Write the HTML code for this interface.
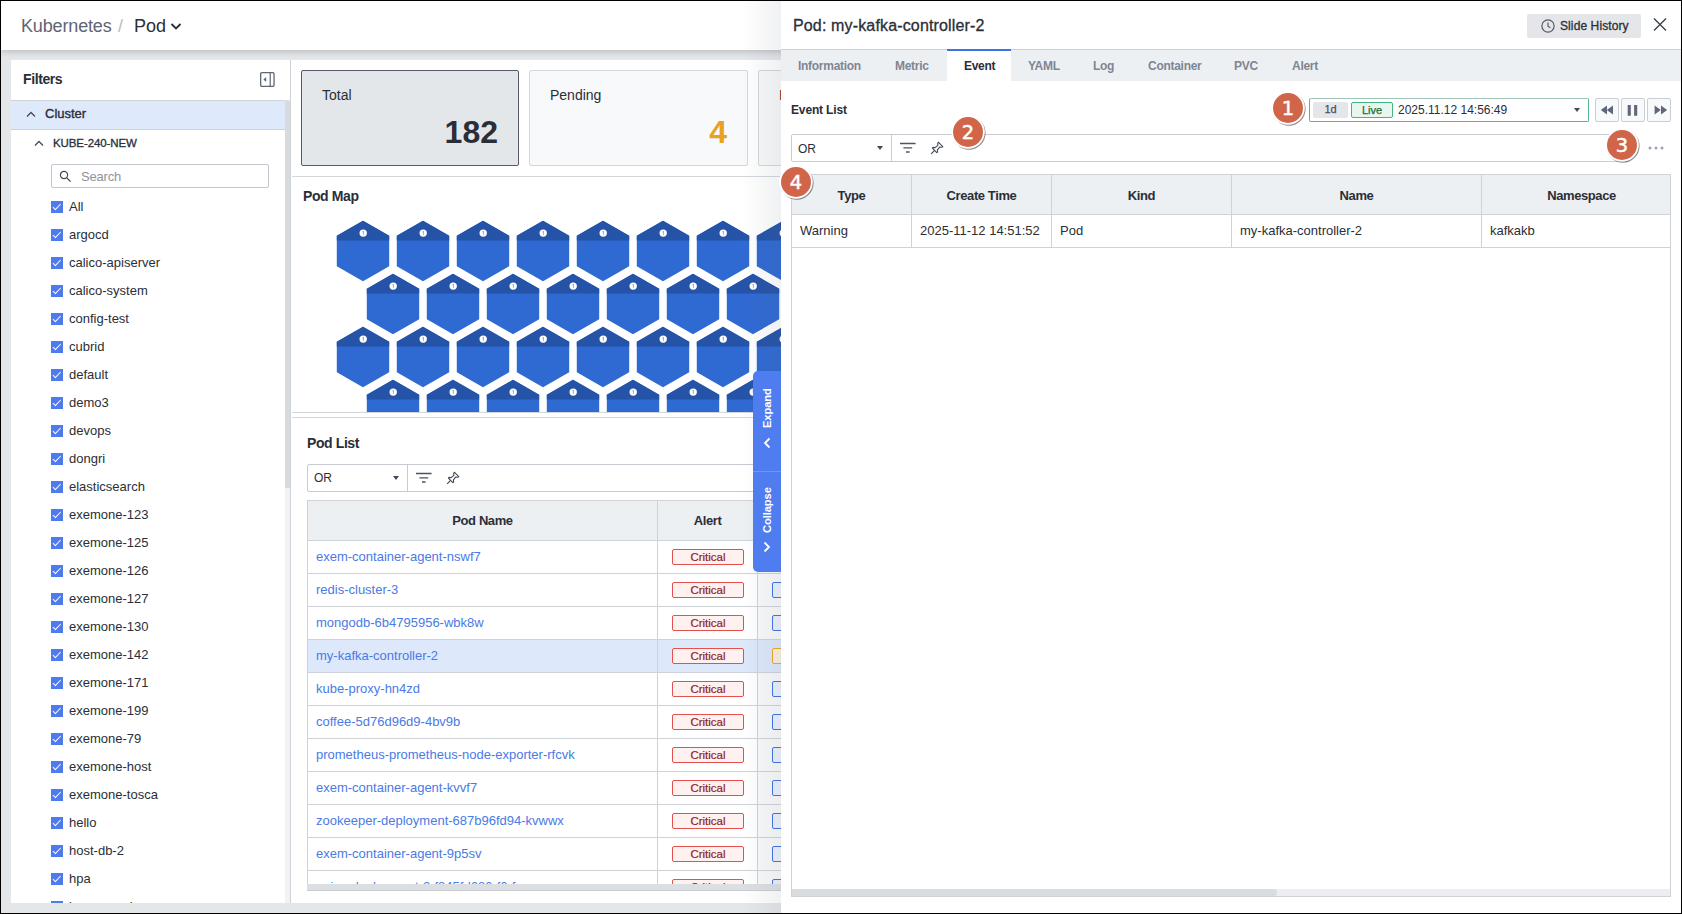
<!DOCTYPE html>
<html lang="en">
<head>
<meta charset="utf-8">
<title>Kubernetes / Pod</title>
<style>
*{box-sizing:border-box;margin:0;padding:0}
html,body{width:1682px;height:914px;overflow:hidden}
body{position:relative;background:#e4e7ea;font-family:"Liberation Sans",sans-serif;font-size:13px;color:#2a2e37}
.abs{position:absolute}
#frame{position:absolute;left:0;top:0;width:1682px;height:914px;border:1px solid #000;z-index:100;pointer-events:none}
/* header */
#hdr{position:absolute;left:1px;top:1px;width:1680px;height:49px;background:#fff;box-shadow:0 2px 6px rgba(70,75,85,.26)}
#hdr .k{position:absolute;left:20px;top:14px;font-size:18px;line-height:22px;color:#5f6573;letter-spacing:-0.15px}
#hdr .s{position:absolute;left:117px;top:14px;font-size:18px;line-height:22px;color:#b8bcc4}
#hdr .p{position:absolute;left:133px;top:14px;font-size:18px;line-height:22px;color:#2a2e37}
/* filters */
#flt{position:absolute;left:11px;top:60px;width:280px;height:843px;background:#fff;overflow:hidden;border-right:1px solid #cfd3d8}
#flt .ttl{position:absolute;left:12px;top:11px;font-weight:bold;font-size:14px;line-height:16px;color:#2a2e37;letter-spacing:-0.4px}
#flt .clu{position:absolute;left:0;top:40px;width:274px;height:30px;background:#dfe9fc;border-top:1px solid #cfd3d8;border-bottom:1px solid #cfd3d8}
#flt .clu span{position:absolute;left:34px;top:5px;font-size:13px;line-height:16px;color:#2a2e37;-webkit-text-stroke:0.35px #2a2e37}
#flt .kube{position:absolute;left:42px;top:76px;font-size:11.5px;line-height:14px;color:#2a2e37;-webkit-text-stroke:0.3px #2a2e37;letter-spacing:-0.1px}
#flt .srch{position:absolute;left:40px;top:104px;width:218px;height:24px;border:1px solid #c2c6cd;border-radius:2px;background:#fff}
#flt .srch span{position:absolute;left:29px;top:3.7px;font-size:13px;line-height:16px;color:#8e939d;letter-spacing:-0.2px}
.ck{position:absolute;left:40px;width:200px;height:16px}
.ck i{position:absolute;left:0;top:2px;width:12px;height:12px;background:#4d7bef}
.ck i:after{content:"";position:absolute;left:2.2px;top:2.6px;width:6.5px;height:3.4px;border-left:1.4px solid #fff;border-bottom:1.4px solid #fff;transform:rotate(-47deg)}
.ck span{position:absolute;left:18px;top:0;font-size:13px;line-height:16px;color:#2a2e37;white-space:nowrap}
#fsb{position:absolute;left:274px;top:40px;width:5px;height:803px;background:#f1f2f4}
#fsb:before{content:"";position:absolute;left:0;top:0;width:5px;height:388px;background:#d8dbde;border-radius:2px 2px 0 0}
/* main */
#main{position:absolute;left:292px;top:60px;width:489px;height:843px;background:#fff;overflow:hidden;box-shadow:-1px 0 0 #fff}
.card{position:absolute;top:10px;width:219px;height:96px;border:1px solid #d3d6db;border-radius:2px;background:#f8f9fa}
.card .l{position:absolute;left:20px;top:16px;font-size:14px;line-height:16px;color:#2a2e37}
.card .v{position:absolute;right:20px;top:43.2px;font-size:32px;line-height:36px;font-weight:bold;color:#2a2e37}
.hl{position:absolute;left:0;width:489px;height:1px;background:#d3d6db}
.h2{position:absolute;font-weight:bold;font-size:14px;line-height:16px;color:#2a2e37;letter-spacing:-0.4px}

/* filter bar */
.fbar{position:absolute;height:28px;border:1px solid #c8ccd2;border-radius:2px;background:#fff}
.fbar .or{position:absolute;left:0;top:0;width:100px;height:26px;border-right:1px solid #c8ccd2}
.fbar .or span{position:absolute;left:6px;top:6px;font-size:12px;line-height:16px;color:#2a2e37}
.fbar .or b{position:absolute;left:85px;top:11px;width:0;height:0;border-left:3.5px solid transparent;border-right:3.5px solid transparent;border-top:4px solid #444a55}
/* tables */
.th{position:absolute;background:#edf0f3;border:1px solid #cfd3d8;font-weight:bold;font-size:13px;color:#2a2e37;text-align:center;letter-spacing:-0.4px;padding-top:1px}
.td{position:absolute;background:#fff;border:1px solid #cfd3d8;border-top:none;font-size:13px;color:#2a2e37;white-space:nowrap;overflow:hidden}
.td a{position:absolute;left:8px;top:8px;line-height:16px;color:#4a7ae6;text-decoration:none}
.td.sel{background:#dde8fb}
.crit{position:absolute;left:14px;top:8px;width:72px;height:16px;border:1px solid #e4504c;border-radius:2px;background:#fef1f0;color:#8f1d1d;font-size:11.5px;line-height:14px;text-align:center;-webkit-text-stroke:0.2px #8f1d1d}
.bx{position:absolute;left:14px;top:8px;width:40px;height:16px;border:1px solid #3f72e6;border-radius:2px;background:#ecf1fd}
.bx.o{border-color:#eea42c;background:#fdf1dc}
/* expand tab */
#exp{position:absolute;left:753px;top:371px;width:28px;height:201px;background:#4f7df0;border-radius:5px 0 0 5px;z-index:5;color:#fff;overflow:hidden}
#exp .ln{position:absolute;left:0;top:100px;width:28px;height:1px;background:#6f95f4}
#exp .t{position:absolute;left:0;width:28px;font-weight:bold;font-size:11.2px;line-height:28px;white-space:nowrap;transform-origin:0 0;letter-spacing:-0.1px;transform:rotate(-90deg);text-align:left}
/* panel */
#shade{position:absolute;left:741px;top:1px;width:40px;height:912px;background:linear-gradient(to right,rgba(90,100,115,0),rgba(90,100,115,.09));z-index:4}
#pnl{position:absolute;left:781px;top:1px;width:900px;height:912px;background:#fff;z-index:6}
#pnl .title{position:absolute;left:12px;top:15.3px;font-size:16px;line-height:20px;color:#2a2e37;-webkit-text-stroke:0.3px #2a2e37;letter-spacing:0.15px}
#pnl .sh{position:absolute;left:746px;top:13px;width:114px;height:24px;background:#e4e6ea;border-radius:2px}
#pnl .sh span{position:absolute;left:33px;top:4px;font-size:12px;line-height:16px;color:#2a2e37;-webkit-text-stroke:0.3px #2a2e37;letter-spacing:0.1px}
#tabs{position:absolute;left:0;top:48px;width:900px;height:32px;background:#edf0f3;border-top:1px solid #cdd1d6}
#tabs span{position:absolute;top:8px;font-size:12px;line-height:16px;font-weight:bold;color:#7f8592;white-space:nowrap;letter-spacing:-0.28px}
#tabs .act{position:absolute;left:166px;top:-1px;width:64px;height:32px;background:#fff}
#tabs .act:before{content:"";position:absolute;left:0;top:0;width:64px;height:1.6px;background:#3f72e6}
.num{position:absolute;width:31px;height:31px;border-radius:50%;background:#d1623f;border:2px solid #fff;box-shadow:0 1px 3px rgba(0,0,0,.5);color:#fff;font-size:19px;line-height:27px;text-align:center;font-family:"DejaVu Sans","Liberation Sans",sans-serif;z-index:9}
#tp{position:absolute;left:528px;top:97px;width:280px;height:24px;border:1px solid #52b88f;border-top-color:#9ec4bb;border-radius:2px;background:#fff}
#tp .d1{position:absolute;left:3px;top:3px;width:35px;height:16px;background:#e4e6ea;border-radius:2px;font-size:11px;line-height:14px;text-align:center;color:#4a4f5c;-webkit-text-stroke:0.25px #4a4f5c}
#tp .lv{position:absolute;left:41px;top:3px;width:42px;height:16px;background:#e7f7ee;border:1px solid #43b581;border-radius:2px;font-size:11px;line-height:14px;text-align:center;color:#1b6b43;-webkit-text-stroke:0.25px #1b6b43}
#tp .dt{position:absolute;left:88px;top:3px;font-size:12px;line-height:16px;color:#2a2e37}
#tp b{position:absolute;left:264px;top:9px;width:0;height:0;border-left:3.5px solid transparent;border-right:3.5px solid transparent;border-top:4px solid #444a55}
.pb{position:absolute;top:97px;width:24px;height:24px;border:1px solid #c9cdd6;border-radius:2px;background:#f8f9fb}
</style>
</head>
<body>
<div id="hdr">
  <span class="k">Kubernetes</span><span class="s">/</span><span class="p">Pod</span>
  <svg class="abs" style="left:169px;top:20.7px" width="12" height="9" viewBox="0 0 12 9"><path d="M1.5 2 L6 6.5 L10.5 2" fill="none" stroke="#2a2e37" stroke-width="1.8"/></svg>
</div>

<div id="flt">
  <div class="ttl">Filters</div>
  <svg class="abs" style="left:248.6px;top:12.3px" width="15" height="15" viewBox="0 0 15 15"><rect x="0.65" y="0.65" width="13.4" height="13.7" rx="1.2" fill="none" stroke="#5e6575" stroke-width="1.3"/><path d="M10.2 1 V14" stroke="#5e6575" stroke-width="1.2"/><path d="M6.2 5 L3.4 7.5 L6.2 10 Z" fill="#5e6575"/></svg>
  <div class="clu"><svg class="abs" style="left:15px;top:10px" width="10" height="7" viewBox="0 0 10 7"><path d="M1 5.5 L5 1.5 L9 5.5" fill="none" stroke="#444a55" stroke-width="1.3"/></svg><span>Cluster</span></div>
  <svg class="abs" style="left:23px;top:80px" width="10" height="7" viewBox="0 0 10 7"><path d="M1 5.5 L5 1.5 L9 5.5" fill="none" stroke="#444a55" stroke-width="1.3"/></svg>
  <div class="kube">KUBE-240-NEW</div>
  <div class="srch"><svg class="abs" style="left:7px;top:5px" width="13" height="13" viewBox="0 0 13 13"><circle cx="5" cy="5" r="3.6" fill="none" stroke="#444a55" stroke-width="1.2"/><path d="M7.6 7.6 L11.6 11.6" stroke="#444a55" stroke-width="1.3"/></svg><span>Search</span></div>
  <div id="cks">
  <div class="ck" style="top:139px"><i></i><span>All</span></div>
  <div class="ck" style="top:167px"><i></i><span>argocd</span></div>
  <div class="ck" style="top:195px"><i></i><span>calico-apiserver</span></div>
  <div class="ck" style="top:223px"><i></i><span>calico-system</span></div>
  <div class="ck" style="top:251px"><i></i><span>config-test</span></div>
  <div class="ck" style="top:279px"><i></i><span>cubrid</span></div>
  <div class="ck" style="top:307px"><i></i><span>default</span></div>
  <div class="ck" style="top:335px"><i></i><span>demo3</span></div>
  <div class="ck" style="top:363px"><i></i><span>devops</span></div>
  <div class="ck" style="top:391px"><i></i><span>dongri</span></div>
  <div class="ck" style="top:419px"><i></i><span>elasticsearch</span></div>
  <div class="ck" style="top:447px"><i></i><span>exemone-123</span></div>
  <div class="ck" style="top:475px"><i></i><span>exemone-125</span></div>
  <div class="ck" style="top:503px"><i></i><span>exemone-126</span></div>
  <div class="ck" style="top:531px"><i></i><span>exemone-127</span></div>
  <div class="ck" style="top:559px"><i></i><span>exemone-130</span></div>
  <div class="ck" style="top:587px"><i></i><span>exemone-142</span></div>
  <div class="ck" style="top:615px"><i></i><span>exemone-171</span></div>
  <div class="ck" style="top:643px"><i></i><span>exemone-199</span></div>
  <div class="ck" style="top:671px"><i></i><span>exemone-79</span></div>
  <div class="ck" style="top:699px"><i></i><span>exemone-host</span></div>
  <div class="ck" style="top:727px"><i></i><span>exemone-tosca</span></div>
  <div class="ck" style="top:755px"><i></i><span>hello</span></div>
  <div class="ck" style="top:783px"><i></i><span>host-db-2</span></div>
  <div class="ck" style="top:811px"><i></i><span>hpa</span></div>
  <div class="ck" style="top:839px"><i></i><span>ingress-nginx</span></div>
  </div>
  <div id="fsb"></div>
</div>

<div id="main">
  <div class="card" style="left:9px;width:218px;border-color:#555b68;background:#e4e7ea"><div class="l">Total</div><div class="v">182</div></div>
  <div class="card" style="left:237px"><div class="l">Pending</div><div class="v" style="color:#e9a123">4</div></div>
  <div class="card" style="left:466px"><div class="l" style="color:#7a2a1c">Failed</div></div>
  <div class="hl" style="top:116px"></div>
  <div class="h2" style="left:11px;top:128px">Pod Map</div>
  <svg class="abs" style="left:0;top:150px" width="489" height="202" viewBox="0 0 489 202">
  <g transform="translate(71 41)"><path d="M0 -30.2 L26.2 -15.2 L26.2 15.2 L0 30.2 L-26.2 15.2 L-26.2 -15.2 Z" fill="#2f69d2"/><path d="M0 -30.2 L26.2 -15.2 L26.2 -10.6 L-26.2 -10.6 L-26.2 -15.2 Z" fill="#2553a8"/><circle cx="0.2" cy="-17.9" r="3.7" fill="#fff"/><path d="M-0.25 -20.1 L0.65 -20.1 L0.4 -15.7 L0 -15.7 Z" fill="#4c72bd"/></g>
  <g transform="translate(131 41)"><path d="M0 -30.2 L26.2 -15.2 L26.2 15.2 L0 30.2 L-26.2 15.2 L-26.2 -15.2 Z" fill="#2f69d2"/><path d="M0 -30.2 L26.2 -15.2 L26.2 -10.6 L-26.2 -10.6 L-26.2 -15.2 Z" fill="#2553a8"/><circle cx="0.2" cy="-17.9" r="3.7" fill="#fff"/><path d="M-0.25 -20.1 L0.65 -20.1 L0.4 -15.7 L0 -15.7 Z" fill="#4c72bd"/></g>
  <g transform="translate(191 41)"><path d="M0 -30.2 L26.2 -15.2 L26.2 15.2 L0 30.2 L-26.2 15.2 L-26.2 -15.2 Z" fill="#2f69d2"/><path d="M0 -30.2 L26.2 -15.2 L26.2 -10.6 L-26.2 -10.6 L-26.2 -15.2 Z" fill="#2553a8"/><circle cx="0.2" cy="-17.9" r="3.7" fill="#fff"/><path d="M-0.25 -20.1 L0.65 -20.1 L0.4 -15.7 L0 -15.7 Z" fill="#4c72bd"/></g>
  <g transform="translate(251 41)"><path d="M0 -30.2 L26.2 -15.2 L26.2 15.2 L0 30.2 L-26.2 15.2 L-26.2 -15.2 Z" fill="#2f69d2"/><path d="M0 -30.2 L26.2 -15.2 L26.2 -10.6 L-26.2 -10.6 L-26.2 -15.2 Z" fill="#2553a8"/><circle cx="0.2" cy="-17.9" r="3.7" fill="#fff"/><path d="M-0.25 -20.1 L0.65 -20.1 L0.4 -15.7 L0 -15.7 Z" fill="#4c72bd"/></g>
  <g transform="translate(311 41)"><path d="M0 -30.2 L26.2 -15.2 L26.2 15.2 L0 30.2 L-26.2 15.2 L-26.2 -15.2 Z" fill="#2f69d2"/><path d="M0 -30.2 L26.2 -15.2 L26.2 -10.6 L-26.2 -10.6 L-26.2 -15.2 Z" fill="#2553a8"/><circle cx="0.2" cy="-17.9" r="3.7" fill="#fff"/><path d="M-0.25 -20.1 L0.65 -20.1 L0.4 -15.7 L0 -15.7 Z" fill="#4c72bd"/></g>
  <g transform="translate(371 41)"><path d="M0 -30.2 L26.2 -15.2 L26.2 15.2 L0 30.2 L-26.2 15.2 L-26.2 -15.2 Z" fill="#2f69d2"/><path d="M0 -30.2 L26.2 -15.2 L26.2 -10.6 L-26.2 -10.6 L-26.2 -15.2 Z" fill="#2553a8"/><circle cx="0.2" cy="-17.9" r="3.7" fill="#fff"/><path d="M-0.25 -20.1 L0.65 -20.1 L0.4 -15.7 L0 -15.7 Z" fill="#4c72bd"/></g>
  <g transform="translate(431 41)"><path d="M0 -30.2 L26.2 -15.2 L26.2 15.2 L0 30.2 L-26.2 15.2 L-26.2 -15.2 Z" fill="#2f69d2"/><path d="M0 -30.2 L26.2 -15.2 L26.2 -10.6 L-26.2 -10.6 L-26.2 -15.2 Z" fill="#2553a8"/><circle cx="0.2" cy="-17.9" r="3.7" fill="#fff"/><path d="M-0.25 -20.1 L0.65 -20.1 L0.4 -15.7 L0 -15.7 Z" fill="#4c72bd"/></g>
  <g transform="translate(491 41)"><path d="M0 -30.2 L26.2 -15.2 L26.2 15.2 L0 30.2 L-26.2 15.2 L-26.2 -15.2 Z" fill="#2f69d2"/><path d="M0 -30.2 L26.2 -15.2 L26.2 -10.6 L-26.2 -10.6 L-26.2 -15.2 Z" fill="#2553a8"/><circle cx="0.2" cy="-17.9" r="3.7" fill="#fff"/><path d="M-0.25 -20.1 L0.65 -20.1 L0.4 -15.7 L0 -15.7 Z" fill="#4c72bd"/></g>
  <g transform="translate(101 94)"><path d="M0 -30.2 L26.2 -15.2 L26.2 15.2 L0 30.2 L-26.2 15.2 L-26.2 -15.2 Z" fill="#2f69d2"/><path d="M0 -30.2 L26.2 -15.2 L26.2 -10.6 L-26.2 -10.6 L-26.2 -15.2 Z" fill="#2553a8"/><circle cx="0.2" cy="-17.9" r="3.7" fill="#fff"/><path d="M-0.25 -20.1 L0.65 -20.1 L0.4 -15.7 L0 -15.7 Z" fill="#4c72bd"/></g>
  <g transform="translate(161 94)"><path d="M0 -30.2 L26.2 -15.2 L26.2 15.2 L0 30.2 L-26.2 15.2 L-26.2 -15.2 Z" fill="#2f69d2"/><path d="M0 -30.2 L26.2 -15.2 L26.2 -10.6 L-26.2 -10.6 L-26.2 -15.2 Z" fill="#2553a8"/><circle cx="0.2" cy="-17.9" r="3.7" fill="#fff"/><path d="M-0.25 -20.1 L0.65 -20.1 L0.4 -15.7 L0 -15.7 Z" fill="#4c72bd"/></g>
  <g transform="translate(221 94)"><path d="M0 -30.2 L26.2 -15.2 L26.2 15.2 L0 30.2 L-26.2 15.2 L-26.2 -15.2 Z" fill="#2f69d2"/><path d="M0 -30.2 L26.2 -15.2 L26.2 -10.6 L-26.2 -10.6 L-26.2 -15.2 Z" fill="#2553a8"/><circle cx="0.2" cy="-17.9" r="3.7" fill="#fff"/><path d="M-0.25 -20.1 L0.65 -20.1 L0.4 -15.7 L0 -15.7 Z" fill="#4c72bd"/></g>
  <g transform="translate(281 94)"><path d="M0 -30.2 L26.2 -15.2 L26.2 15.2 L0 30.2 L-26.2 15.2 L-26.2 -15.2 Z" fill="#2f69d2"/><path d="M0 -30.2 L26.2 -15.2 L26.2 -10.6 L-26.2 -10.6 L-26.2 -15.2 Z" fill="#2553a8"/><circle cx="0.2" cy="-17.9" r="3.7" fill="#fff"/><path d="M-0.25 -20.1 L0.65 -20.1 L0.4 -15.7 L0 -15.7 Z" fill="#4c72bd"/></g>
  <g transform="translate(341 94)"><path d="M0 -30.2 L26.2 -15.2 L26.2 15.2 L0 30.2 L-26.2 15.2 L-26.2 -15.2 Z" fill="#2f69d2"/><path d="M0 -30.2 L26.2 -15.2 L26.2 -10.6 L-26.2 -10.6 L-26.2 -15.2 Z" fill="#2553a8"/><circle cx="0.2" cy="-17.9" r="3.7" fill="#fff"/><path d="M-0.25 -20.1 L0.65 -20.1 L0.4 -15.7 L0 -15.7 Z" fill="#4c72bd"/></g>
  <g transform="translate(401 94)"><path d="M0 -30.2 L26.2 -15.2 L26.2 15.2 L0 30.2 L-26.2 15.2 L-26.2 -15.2 Z" fill="#2f69d2"/><path d="M0 -30.2 L26.2 -15.2 L26.2 -10.6 L-26.2 -10.6 L-26.2 -15.2 Z" fill="#2553a8"/><circle cx="0.2" cy="-17.9" r="3.7" fill="#fff"/><path d="M-0.25 -20.1 L0.65 -20.1 L0.4 -15.7 L0 -15.7 Z" fill="#4c72bd"/></g>
  <g transform="translate(461 94)"><path d="M0 -30.2 L26.2 -15.2 L26.2 15.2 L0 30.2 L-26.2 15.2 L-26.2 -15.2 Z" fill="#2f69d2"/><path d="M0 -30.2 L26.2 -15.2 L26.2 -10.6 L-26.2 -10.6 L-26.2 -15.2 Z" fill="#2553a8"/><circle cx="0.2" cy="-17.9" r="3.7" fill="#fff"/><path d="M-0.25 -20.1 L0.65 -20.1 L0.4 -15.7 L0 -15.7 Z" fill="#4c72bd"/></g>
  <g transform="translate(71 147)"><path d="M0 -30.2 L26.2 -15.2 L26.2 15.2 L0 30.2 L-26.2 15.2 L-26.2 -15.2 Z" fill="#2f69d2"/><path d="M0 -30.2 L26.2 -15.2 L26.2 -10.6 L-26.2 -10.6 L-26.2 -15.2 Z" fill="#2553a8"/><circle cx="0.2" cy="-17.9" r="3.7" fill="#fff"/><path d="M-0.25 -20.1 L0.65 -20.1 L0.4 -15.7 L0 -15.7 Z" fill="#4c72bd"/></g>
  <g transform="translate(131 147)"><path d="M0 -30.2 L26.2 -15.2 L26.2 15.2 L0 30.2 L-26.2 15.2 L-26.2 -15.2 Z" fill="#2f69d2"/><path d="M0 -30.2 L26.2 -15.2 L26.2 -10.6 L-26.2 -10.6 L-26.2 -15.2 Z" fill="#2553a8"/><circle cx="0.2" cy="-17.9" r="3.7" fill="#fff"/><path d="M-0.25 -20.1 L0.65 -20.1 L0.4 -15.7 L0 -15.7 Z" fill="#4c72bd"/></g>
  <g transform="translate(191 147)"><path d="M0 -30.2 L26.2 -15.2 L26.2 15.2 L0 30.2 L-26.2 15.2 L-26.2 -15.2 Z" fill="#2f69d2"/><path d="M0 -30.2 L26.2 -15.2 L26.2 -10.6 L-26.2 -10.6 L-26.2 -15.2 Z" fill="#2553a8"/><circle cx="0.2" cy="-17.9" r="3.7" fill="#fff"/><path d="M-0.25 -20.1 L0.65 -20.1 L0.4 -15.7 L0 -15.7 Z" fill="#4c72bd"/></g>
  <g transform="translate(251 147)"><path d="M0 -30.2 L26.2 -15.2 L26.2 15.2 L0 30.2 L-26.2 15.2 L-26.2 -15.2 Z" fill="#2f69d2"/><path d="M0 -30.2 L26.2 -15.2 L26.2 -10.6 L-26.2 -10.6 L-26.2 -15.2 Z" fill="#2553a8"/><circle cx="0.2" cy="-17.9" r="3.7" fill="#fff"/><path d="M-0.25 -20.1 L0.65 -20.1 L0.4 -15.7 L0 -15.7 Z" fill="#4c72bd"/></g>
  <g transform="translate(311 147)"><path d="M0 -30.2 L26.2 -15.2 L26.2 15.2 L0 30.2 L-26.2 15.2 L-26.2 -15.2 Z" fill="#2f69d2"/><path d="M0 -30.2 L26.2 -15.2 L26.2 -10.6 L-26.2 -10.6 L-26.2 -15.2 Z" fill="#2553a8"/><circle cx="0.2" cy="-17.9" r="3.7" fill="#fff"/><path d="M-0.25 -20.1 L0.65 -20.1 L0.4 -15.7 L0 -15.7 Z" fill="#4c72bd"/></g>
  <g transform="translate(371 147)"><path d="M0 -30.2 L26.2 -15.2 L26.2 15.2 L0 30.2 L-26.2 15.2 L-26.2 -15.2 Z" fill="#2f69d2"/><path d="M0 -30.2 L26.2 -15.2 L26.2 -10.6 L-26.2 -10.6 L-26.2 -15.2 Z" fill="#2553a8"/><circle cx="0.2" cy="-17.9" r="3.7" fill="#fff"/><path d="M-0.25 -20.1 L0.65 -20.1 L0.4 -15.7 L0 -15.7 Z" fill="#4c72bd"/></g>
  <g transform="translate(431 147)"><path d="M0 -30.2 L26.2 -15.2 L26.2 15.2 L0 30.2 L-26.2 15.2 L-26.2 -15.2 Z" fill="#2f69d2"/><path d="M0 -30.2 L26.2 -15.2 L26.2 -10.6 L-26.2 -10.6 L-26.2 -15.2 Z" fill="#2553a8"/><circle cx="0.2" cy="-17.9" r="3.7" fill="#fff"/><path d="M-0.25 -20.1 L0.65 -20.1 L0.4 -15.7 L0 -15.7 Z" fill="#4c72bd"/></g>
  <g transform="translate(491 147)"><path d="M0 -30.2 L26.2 -15.2 L26.2 15.2 L0 30.2 L-26.2 15.2 L-26.2 -15.2 Z" fill="#2f69d2"/><path d="M0 -30.2 L26.2 -15.2 L26.2 -10.6 L-26.2 -10.6 L-26.2 -15.2 Z" fill="#2553a8"/><circle cx="0.2" cy="-17.9" r="3.7" fill="#fff"/><path d="M-0.25 -20.1 L0.65 -20.1 L0.4 -15.7 L0 -15.7 Z" fill="#4c72bd"/></g>
  <g transform="translate(101 200)"><path d="M0 -30.2 L26.2 -15.2 L26.2 15.2 L0 30.2 L-26.2 15.2 L-26.2 -15.2 Z" fill="#2f69d2"/><path d="M0 -30.2 L26.2 -15.2 L26.2 -10.6 L-26.2 -10.6 L-26.2 -15.2 Z" fill="#2553a8"/><circle cx="0.2" cy="-17.9" r="3.7" fill="#fff"/><path d="M-0.25 -20.1 L0.65 -20.1 L0.4 -15.7 L0 -15.7 Z" fill="#4c72bd"/></g>
  <g transform="translate(161 200)"><path d="M0 -30.2 L26.2 -15.2 L26.2 15.2 L0 30.2 L-26.2 15.2 L-26.2 -15.2 Z" fill="#2f69d2"/><path d="M0 -30.2 L26.2 -15.2 L26.2 -10.6 L-26.2 -10.6 L-26.2 -15.2 Z" fill="#2553a8"/><circle cx="0.2" cy="-17.9" r="3.7" fill="#fff"/><path d="M-0.25 -20.1 L0.65 -20.1 L0.4 -15.7 L0 -15.7 Z" fill="#4c72bd"/></g>
  <g transform="translate(221 200)"><path d="M0 -30.2 L26.2 -15.2 L26.2 15.2 L0 30.2 L-26.2 15.2 L-26.2 -15.2 Z" fill="#2f69d2"/><path d="M0 -30.2 L26.2 -15.2 L26.2 -10.6 L-26.2 -10.6 L-26.2 -15.2 Z" fill="#2553a8"/><circle cx="0.2" cy="-17.9" r="3.7" fill="#fff"/><path d="M-0.25 -20.1 L0.65 -20.1 L0.4 -15.7 L0 -15.7 Z" fill="#4c72bd"/></g>
  <g transform="translate(281 200)"><path d="M0 -30.2 L26.2 -15.2 L26.2 15.2 L0 30.2 L-26.2 15.2 L-26.2 -15.2 Z" fill="#2f69d2"/><path d="M0 -30.2 L26.2 -15.2 L26.2 -10.6 L-26.2 -10.6 L-26.2 -15.2 Z" fill="#2553a8"/><circle cx="0.2" cy="-17.9" r="3.7" fill="#fff"/><path d="M-0.25 -20.1 L0.65 -20.1 L0.4 -15.7 L0 -15.7 Z" fill="#4c72bd"/></g>
  <g transform="translate(341 200)"><path d="M0 -30.2 L26.2 -15.2 L26.2 15.2 L0 30.2 L-26.2 15.2 L-26.2 -15.2 Z" fill="#2f69d2"/><path d="M0 -30.2 L26.2 -15.2 L26.2 -10.6 L-26.2 -10.6 L-26.2 -15.2 Z" fill="#2553a8"/><circle cx="0.2" cy="-17.9" r="3.7" fill="#fff"/><path d="M-0.25 -20.1 L0.65 -20.1 L0.4 -15.7 L0 -15.7 Z" fill="#4c72bd"/></g>
  <g transform="translate(401 200)"><path d="M0 -30.2 L26.2 -15.2 L26.2 15.2 L0 30.2 L-26.2 15.2 L-26.2 -15.2 Z" fill="#2f69d2"/><path d="M0 -30.2 L26.2 -15.2 L26.2 -10.6 L-26.2 -10.6 L-26.2 -15.2 Z" fill="#2553a8"/><circle cx="0.2" cy="-17.9" r="3.7" fill="#fff"/><path d="M-0.25 -20.1 L0.65 -20.1 L0.4 -15.7 L0 -15.7 Z" fill="#4c72bd"/></g>
  <g transform="translate(461 200)"><path d="M0 -30.2 L26.2 -15.2 L26.2 15.2 L0 30.2 L-26.2 15.2 L-26.2 -15.2 Z" fill="#2f69d2"/><path d="M0 -30.2 L26.2 -15.2 L26.2 -10.6 L-26.2 -10.6 L-26.2 -15.2 Z" fill="#2553a8"/><circle cx="0.2" cy="-17.9" r="3.7" fill="#fff"/><path d="M-0.25 -20.1 L0.65 -20.1 L0.4 -15.7 L0 -15.7 Z" fill="#4c72bd"/></g>
  </svg>
  <div class="hl" style="top:352px"></div>
  <div class="hl" style="top:357px"></div>
  <div class="h2" style="left:15px;top:375px">Pod List</div>
  <div class="fbar" style="left:15px;top:404px;width:600px"><div class="or"><span style="top:5px">OR</span><b></b></div><svg class="abs" style="left:106.5px;top:7.2px" width="18" height="12" viewBox="0 0 18 12"><path d="M1 1.5 H16.6 M4.4 5.8 H13.2 M7 10 H10.6" stroke="#4d535f" stroke-width="1.3" fill="none"/></svg><svg class="abs" style="left:138px;top:6px" width="14" height="14" viewBox="0 0 14 14"><path d="M8.3 1.2 L12.8 5.7 L11.6 6.3 L9.6 6.1 L7.4 8.9 L7.6 11 L6.8 11.6 L2.4 7.2 L3 6.4 L5.1 6.6 L7.9 4.4 L7.7 2.4 Z" fill="none" stroke="#444a55" stroke-width="1.1" stroke-linejoin="round"/><path d="M4.6 9.4 L1.2 12.8" stroke="#444a55" stroke-width="1.2"/></svg></div>
  <div class="th" style="left:15px;top:440px;width:351px;height:41px;line-height:39px;padding-top:0">Pod Name</div>
  <div class="th" style="left:365px;top:440px;width:101px;height:41px;line-height:39px;padding-top:0">Alert</div>
  <div class="th" style="left:465px;top:440px;width:101px;height:41px;line-height:39px"></div>
  <div class="td" style="left:15px;top:480px;width:351px;height:34px;border-top:1px solid #cfd3d8"><a>exem-container-agent-nswf7</a></div>
  <div class="td" style="left:365px;top:480px;width:101px;height:34px;border-top:1px solid #cfd3d8"><div class="crit">Critical</div></div>
  <div class="td" style="left:465px;top:480px;width:101px;height:34px;border-top:1px solid #cfd3d8;background:#f9fafb"><div class="bx"></div></div>
  <div class="td" style="left:15px;top:513px;width:351px;height:34px;border-top:1px solid #cfd3d8"><a>redis-cluster-3</a></div>
  <div class="td" style="left:365px;top:513px;width:101px;height:34px;border-top:1px solid #cfd3d8"><div class="crit">Critical</div></div>
  <div class="td" style="left:465px;top:513px;width:101px;height:34px;border-top:1px solid #cfd3d8;background:#f9fafb"><div class="bx"></div></div>
  <div class="td" style="left:15px;top:546px;width:351px;height:34px;border-top:1px solid #cfd3d8"><a>mongodb-6b4795956-wbk8w</a></div>
  <div class="td" style="left:365px;top:546px;width:101px;height:34px;border-top:1px solid #cfd3d8"><div class="crit">Critical</div></div>
  <div class="td" style="left:465px;top:546px;width:101px;height:34px;border-top:1px solid #cfd3d8;background:#f9fafb"><div class="bx"></div></div>
  <div class="td sel" style="left:15px;top:579px;width:351px;height:34px;border-top:1px solid #cfd3d8"><a>my-kafka-controller-2</a></div>
  <div class="td sel" style="left:365px;top:579px;width:101px;height:34px;border-top:1px solid #cfd3d8"><div class="crit">Critical</div></div>
  <div class="td sel" style="left:465px;top:579px;width:101px;height:34px;border-top:1px solid #cfd3d8"><div class="bx o"></div></div>
  <div class="td" style="left:15px;top:612px;width:351px;height:34px;border-top:1px solid #cfd3d8"><a>kube-proxy-hn4zd</a></div>
  <div class="td" style="left:365px;top:612px;width:101px;height:34px;border-top:1px solid #cfd3d8"><div class="crit">Critical</div></div>
  <div class="td" style="left:465px;top:612px;width:101px;height:34px;border-top:1px solid #cfd3d8;background:#f9fafb"><div class="bx"></div></div>
  <div class="td" style="left:15px;top:645px;width:351px;height:34px;border-top:1px solid #cfd3d8"><a>coffee-5d76d96d9-4bv9b</a></div>
  <div class="td" style="left:365px;top:645px;width:101px;height:34px;border-top:1px solid #cfd3d8"><div class="crit">Critical</div></div>
  <div class="td" style="left:465px;top:645px;width:101px;height:34px;border-top:1px solid #cfd3d8;background:#f9fafb"><div class="bx"></div></div>
  <div class="td" style="left:15px;top:678px;width:351px;height:34px;border-top:1px solid #cfd3d8"><a>prometheus-prometheus-node-exporter-rfcvk</a></div>
  <div class="td" style="left:365px;top:678px;width:101px;height:34px;border-top:1px solid #cfd3d8"><div class="crit">Critical</div></div>
  <div class="td" style="left:465px;top:678px;width:101px;height:34px;border-top:1px solid #cfd3d8;background:#f9fafb"><div class="bx"></div></div>
  <div class="td" style="left:15px;top:711px;width:351px;height:34px;border-top:1px solid #cfd3d8"><a>exem-container-agent-kvvf7</a></div>
  <div class="td" style="left:365px;top:711px;width:101px;height:34px;border-top:1px solid #cfd3d8"><div class="crit">Critical</div></div>
  <div class="td" style="left:465px;top:711px;width:101px;height:34px;border-top:1px solid #cfd3d8;background:#f9fafb"><div class="bx"></div></div>
  <div class="td" style="left:15px;top:744px;width:351px;height:34px;border-top:1px solid #cfd3d8"><a>zookeeper-deployment-687b96fd94-kvwwx</a></div>
  <div class="td" style="left:365px;top:744px;width:101px;height:34px;border-top:1px solid #cfd3d8"><div class="crit">Critical</div></div>
  <div class="td" style="left:465px;top:744px;width:101px;height:34px;border-top:1px solid #cfd3d8;background:#f9fafb"><div class="bx"></div></div>
  <div class="td" style="left:15px;top:777px;width:351px;height:34px;border-top:1px solid #cfd3d8"><a>exem-container-agent-9p5sv</a></div>
  <div class="td" style="left:365px;top:777px;width:101px;height:34px;border-top:1px solid #cfd3d8"><div class="crit">Critical</div></div>
  <div class="td" style="left:465px;top:777px;width:101px;height:34px;border-top:1px solid #cfd3d8;background:#f9fafb"><div class="bx"></div></div>
  <div class="td" style="left:15px;top:810px;width:351px;height:34px;border-top:1px solid #cfd3d8"><a>nginx-deployment-2-f845fd686-f6rfr</a></div>
  <div class="td" style="left:365px;top:810px;width:101px;height:34px;border-top:1px solid #cfd3d8"><div class="crit">Critical</div></div>
  <div class="td" style="left:465px;top:810px;width:101px;height:34px;border-top:1px solid #cfd3d8;background:#f9fafb"><div class="bx"></div></div>
  <div class="abs" style="left:15px;top:824px;width:600px;height:7px;background:#dcdfe2;border-bottom:1px solid #c9cdd2"></div>
  <div class="abs" style="left:0;top:831px;width:489px;height:12px;background:#fff"></div>
</div>

<div id="shade"></div>
<div id="exp"><div class="t" style="top:60.2px;left:0;width:44px;padding-left:3px">Expand</div><svg class="abs" style="left:10px;top:66px" width="8" height="12" viewBox="0 0 8 12"><path d="M6.5 1.5 L2 6 L6.5 10.5" fill="none" stroke="#fff" stroke-width="1.8"/></svg><div class="ln"></div><div class="t" style="top:165px;left:0;width:52px;padding-left:3px">Collapse</div><svg class="abs" style="left:10px;top:170px" width="8" height="12" viewBox="0 0 8 12"><path d="M1.5 1.5 L6 6 L1.5 10.5" fill="none" stroke="#fff" stroke-width="1.8"/></svg></div>
<div id="pnl">
  <div class="title">Pod: my-kafka-controller-2</div>
  <div class="sh"><svg class="abs" style="left:14px;top:5px" width="14" height="14" viewBox="0 0 14 14"><circle cx="7" cy="7" r="6.1" fill="none" stroke="#555b68" stroke-width="1.2"/><path d="M7 3.4 V7.2 L9.4 8.7" fill="none" stroke="#555b68" stroke-width="1.2"/></svg><span>Slide History</span></div>
  <svg class="abs" style="left:872px;top:17px" width="14" height="13" viewBox="0 0 14 13"><path d="M1 0.5 L13 12.5 M13 0.5 L1 12.5" stroke="#3d424c" stroke-width="1.4"/></svg>
  <div id="tabs">
    <div class="act"></div>
    <span style="left:17px">Information</span><span style="left:114px">Metric</span><span style="left:183px;color:#2a2e37">Event</span><span style="left:247px">YAML</span><span style="left:312px">Log</span><span style="left:367px">Container</span><span style="left:453px">PVC</span><span style="left:511px">Alert</span>
  </div>
  <div class="abs" style="left:10px;top:101px;font-size:12px;line-height:16px;font-weight:bold;color:#2a2e37;letter-spacing:-0.15px">Event List</div>
  <div id="tp"><div class="d1">1d</div><div class="lv">Live</div><div class="dt">2025.11.12 14:56:49</div><b></b></div>
  <div class="pb" style="left:814px"><svg class="abs" style="left:4px;top:5.6px" width="14" height="10" viewBox="0 0 14 10"><path d="M7 0.5 V9.5 L0.8 5 Z M13 0.5 V9.5 L6.8 5 Z" fill="#606778"/></svg></div>
  <div class="pb" style="left:840px"><svg class="abs" style="left:5px;top:6px" width="12" height="11" viewBox="0 0 12 11"><path d="M0.7 0.1 H3.8 V10.7 H0.7 Z M7.1 0.1 H10.2 V10.7 H7.1 Z" fill="#606778"/></svg></div>
  <div class="pb" style="left:866px"><svg class="abs" style="left:5.5px;top:5.6px" width="14" height="10" viewBox="0 0 14 10"><path d="M0.6 0.5 V9.5 L6.8 5 Z M7 0.5 V9.5 L13.2 5 Z" fill="#606778"/></svg></div>
  <div class="fbar" style="left:10px;top:133px;width:838px"><div class="or"><span>OR</span><b></b></div><svg class="abs" style="left:106.5px;top:7.2px" width="18" height="12" viewBox="0 0 18 12"><path d="M1 1.5 H16.6 M4.4 5.8 H13.2 M7 10 H10.6" stroke="#4d535f" stroke-width="1.3" fill="none"/></svg><svg class="abs" style="left:138px;top:6px" width="14" height="14" viewBox="0 0 14 14"><path d="M8.3 1.2 L12.8 5.7 L11.6 6.3 L9.6 6.1 L7.4 8.9 L7.6 11 L6.8 11.6 L2.4 7.2 L3 6.4 L5.1 6.6 L7.9 4.4 L7.7 2.4 Z" fill="none" stroke="#444a55" stroke-width="1.1" stroke-linejoin="round"/><path d="M4.6 9.4 L1.2 12.8" stroke="#444a55" stroke-width="1.2"/></svg></div>
  <svg class="abs" style="left:867px;top:144.9px" width="16" height="4" viewBox="0 0 16 4"><circle cx="2" cy="2" r="1.5" fill="#9aa3b5"/><circle cx="8" cy="2" r="1.5" fill="#9aa3b5"/><circle cx="14" cy="2" r="1.5" fill="#9aa3b5"/></svg>
  <div class="abs" style="left:10px;top:173px;width:880px;height:723px;border:1px solid #cfd3d8;background:#fff"></div>
  <div class="th" style="left:10px;top:173px;width:121px;height:41px;line-height:39px">Type</div>
  <div class="td" style="left:10px;top:213px;width:121px;height:34px;border-top:1px solid #cfd3d8"><span style="position:absolute;left:8px;top:8px;line-height:16px">Warning</span></div>
  <div class="th" style="left:130px;top:173px;width:141px;height:41px;line-height:39px">Create Time</div>
  <div class="td" style="left:130px;top:213px;width:141px;height:34px;border-top:1px solid #cfd3d8"><span style="position:absolute;left:8px;top:8px;line-height:16px">2025-11-12 14:51:52</span></div>
  <div class="th" style="left:270px;top:173px;width:181px;height:41px;line-height:39px">Kind</div>
  <div class="td" style="left:270px;top:213px;width:181px;height:34px;border-top:1px solid #cfd3d8"><span style="position:absolute;left:8px;top:8px;line-height:16px">Pod</span></div>
  <div class="th" style="left:450px;top:173px;width:251px;height:41px;line-height:39px">Name</div>
  <div class="td" style="left:450px;top:213px;width:251px;height:34px;border-top:1px solid #cfd3d8"><span style="position:absolute;left:8px;top:8px;line-height:16px">my-kafka-controller-2</span></div>
  <div class="th" style="left:700px;top:173px;width:190px;height:41px;line-height:39px;padding-left:11px">Namespace</div>
  <div class="td" style="left:700px;top:213px;width:190px;height:34px;border-top:1px solid #cfd3d8"><span style="position:absolute;left:8px;top:8px;line-height:16px">kafkakb</span></div>
  <div class="abs" style="left:11px;top:888px;width:878px;height:7px;background:#eceef1"></div>
  <div class="abs" style="left:11px;top:888px;width:485px;height:7px;background:#d9dcdf;border-radius:0 3px 3px 0"></div>
  <svg class="abs" width="0" height="0"><filter id="bsh" x="-30%" y="-30%" width="160%" height="160%"><feGaussianBlur stdDeviation="0.7"/></filter></svg>
  <svg class="abs" style="left:485.1px;top:84.9px;z-index:9;overflow:visible" width="44" height="44" viewBox="0 0 44 44"><circle cx="22.9" cy="23" r="16.7" fill="#000" opacity=".45" filter="url(#bsh)"/><circle cx="22" cy="22" r="16.8" fill="#fff"/><circle cx="22" cy="22" r="15" fill="#d1654a"/><text x="22" y="29" text-anchor="middle" font-family="DejaVu Sans, Liberation Sans, sans-serif" font-size="19.5" fill="#fff" stroke="#fff" stroke-width="0.5">1</text></svg>
  <svg class="abs" style="left:165.1px;top:109.0px;z-index:9;overflow:visible" width="44" height="44" viewBox="0 0 44 44"><circle cx="22.9" cy="23" r="16.7" fill="#000" opacity=".45" filter="url(#bsh)"/><circle cx="22" cy="22" r="16.8" fill="#fff"/><circle cx="22" cy="22" r="15" fill="#d1654a"/><text x="22" y="29" text-anchor="middle" font-family="DejaVu Sans, Liberation Sans, sans-serif" font-size="19.5" fill="#fff" stroke="#fff" stroke-width="0.5">2</text></svg>
  <svg class="abs" style="left:819.0px;top:121.9px;z-index:9;overflow:visible" width="44" height="44" viewBox="0 0 44 44"><circle cx="22.9" cy="23" r="16.7" fill="#000" opacity=".45" filter="url(#bsh)"/><circle cx="22" cy="22" r="16.8" fill="#fff"/><circle cx="22" cy="22" r="15" fill="#d1654a"/><text x="22" y="29" text-anchor="middle" font-family="DejaVu Sans, Liberation Sans, sans-serif" font-size="19.5" fill="#fff" stroke="#fff" stroke-width="0.5">3</text></svg>
  <svg class="abs" style="left:-6.9px;top:158.8px;z-index:9;overflow:visible" width="44" height="44" viewBox="0 0 44 44"><circle cx="22.9" cy="23" r="16.7" fill="#000" opacity=".45" filter="url(#bsh)"/><circle cx="22" cy="22" r="16.8" fill="#fff"/><circle cx="22" cy="22" r="15" fill="#d1654a"/><text x="22" y="29" text-anchor="middle" font-family="DejaVu Sans, Liberation Sans, sans-serif" font-size="19.5" fill="#fff" stroke="#fff" stroke-width="0.5">4</text></svg>
</div>
<div id="frame"></div>
</body>
</html>
